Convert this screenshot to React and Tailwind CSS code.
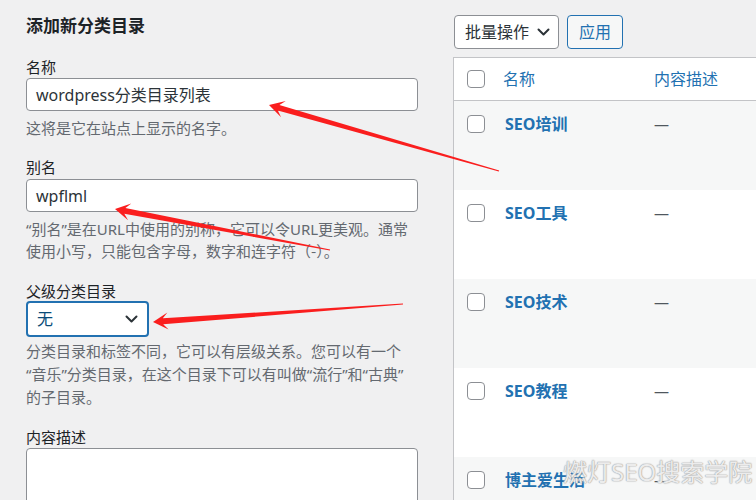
import React from 'react'

const font = "font-['Noto_Sans','Noto_Sans_CJK_SC',sans-serif]"

const arrowPoints = (x1, y1, x2, y2) => {
  const dx = x2 - x1
  const dy = y2 - y1
  const len = Math.hypot(dx, dy)
  const ux = dx / len
  const uy = dy / len
  const nx = -uy
  const ny = ux
  const p = (t, w) => `${(x1 + ux * t + nx * w).toFixed(1)},${(y1 + uy * t + ny * w).toFixed(1)}`
  return [
    p(0, 0.6),
    p(len - 10, 3),
    p(len - 15, 8.5),
    p(len, 0),
    p(len - 15, -8.5),
    p(len - 10, -3),
    p(0, -0.6),
  ].join(' ')
}

const arrows = [
  [499, 171, 269, 105],
  [330, 250, 115, 209],
  [403, 304, 153, 322],
]

const Chevron = () => (
  <svg width="13" height="8" viewBox="0 0 13 8" fill="none">
    <path d="M1.5 1.5 L6.5 6.5 L11.5 1.5" stroke="#2c3338" strokeWidth="2" strokeLinecap="round" strokeLinejoin="round" />
  </svg>
)

const Checkbox = () => (
  <span className="block w-[18px] h-[18px] rounded-[4px] border border-[#8c8f94] bg-white shrink-0" />
)

const categories = ['SEO培训', 'SEO工具', 'SEO技术', 'SEO教程', '博主爱生活']

const App = () => {
  return (
    <div className={`relative w-[756px] h-[500px] overflow-hidden bg-[#f0f0f1] flex ${font}`}>
      {/* Add new category form */}
      <div className="w-[418px] shrink-0 pl-[26px] text-[#1d2327]">
        <h2 className="mt-[14px] text-[17px] leading-[24px] font-bold">添加新分类目录</h2>

        <div className="mt-[18px] text-[15px] leading-[22px]">名称</div>
        <div className="h-[33px] rounded-[4px] border border-[#8c8f94] bg-white px-[9px] flex items-center text-[16px] text-[#2c3338]">
          wordpress分类目录列表
        </div>
        <p className="mt-[6px] text-[15px] leading-[22px] text-[#646970]">这将是它在站点上显示的名字。</p>

        <div className="mt-[17px] text-[15px] leading-[22px]">别名</div>
        <div className="mt-[1px] h-[33px] rounded-[4px] border border-[#8c8f94] bg-white px-[9px] flex items-center text-[16px] text-[#2c3338]">
          wpflml
        </div>
        <p className="mt-[6px] text-[15px] leading-[22px] text-[#646970] whitespace-nowrap">
          “别名”是在URL中使用的别称，它可以令URL更美观。通常
          <br />
          使用小写，只能包含字母，数字和连字符<span className="font-['Noto_Sans_CJK_SC',sans-serif]">（-）。</span>
        </p>

        <div className="mt-[18px] text-[15px] leading-[22px]">父级分类目录</div>
        <div className="-mt-[1px] w-[123px] h-[36px] rounded-[4px] border-2 border-[#2271b1] bg-white pl-[9px] pr-[9px] flex items-center justify-between text-[16px] text-[#0a4b78]">
          <span>无</span>
          <Chevron />
        </div>
        <p className="mt-[3px] text-[15px] leading-[23px] text-[#646970] whitespace-nowrap">
          分类目录和标签不同，它可以有层级关系。您可以有一个
          <br />
          “音乐”分类目录，在这个目录下可以有叫做“流行”和“古典”
          <br />
          的子目录。
        </p>

        <div className="mt-[17px] text-[15px] leading-[22px]">内容描述</div>
        <div className="h-[120px] rounded-[4px] border border-[#8c8f94] bg-white" />
      </div>

      {/* Category list */}
      <div className="ml-[35px] w-[330px] shrink-0 pt-[15px]">
        <div className="flex gap-[8px] ml-[1px]">
          <div className="w-[105px] h-[34px] rounded-[4px] border border-[#8c8f94] bg-white pl-[10px] pr-[8px] flex items-center justify-between text-[16px] text-[#2c3338]">
            <span>批量操作</span>
            <Chevron />
          </div>
          <div className="w-[56px] h-[34px] rounded-[4px] border border-[#2271b1] bg-[#f6f7f7] flex items-center justify-center text-[16px] text-[#2271b1]">
            应用
          </div>
        </div>

        <div className="mt-[8px] border-l border-t border-[#c3c4c7] bg-white">
          <div className="h-[43px] flex items-center border-b border-[#c3c4c7] text-[16px] text-[#2271b1]">
            <div className="w-[49px] pl-[13px]">
              <Checkbox />
            </div>
            <div className="w-[151px]">名称</div>
            <div>内容描述</div>
          </div>
          {categories.map((name, i) => (
            <div
              key={name}
              className={`h-[89px] pt-[12px] flex items-start ${i % 2 === 0 ? 'bg-[#f6f7f7]' : 'bg-white'}`}
            >
              <div className="w-[49px] pl-[13px] h-[22px] flex items-center">
                <Checkbox />
              </div>
              <div className="w-[151px] pl-[2px] text-[16px] leading-[22px] font-bold text-[#2271b1]">{name}</div>
              <div className="text-[15px] leading-[22px] text-[#50575e]">—</div>
            </div>
          ))}
        </div>
      </div>

      {/* Watermark */}
      <div className="absolute left-[563px] top-[456px] text-[24px] leading-[32px] text-white/80 whitespace-nowrap [text-shadow:0_0_1px_#a0a0a0,0_0_1px_#a0a0a0,0_0_2px_#c8c8c8]">
        燃灯SEO搜索学院
      </div>

      {/* Annotation arrows */}
      <svg className="absolute inset-0 pointer-events-none" width="756" height="500" viewBox="0 0 756 500">
        {arrows.map((a, i) => (
          <polygon key={i} points={arrowPoints(...a)} fill="#fa1e1e" />
        ))}
      </svg>
    </div>
  )
}

export default App
